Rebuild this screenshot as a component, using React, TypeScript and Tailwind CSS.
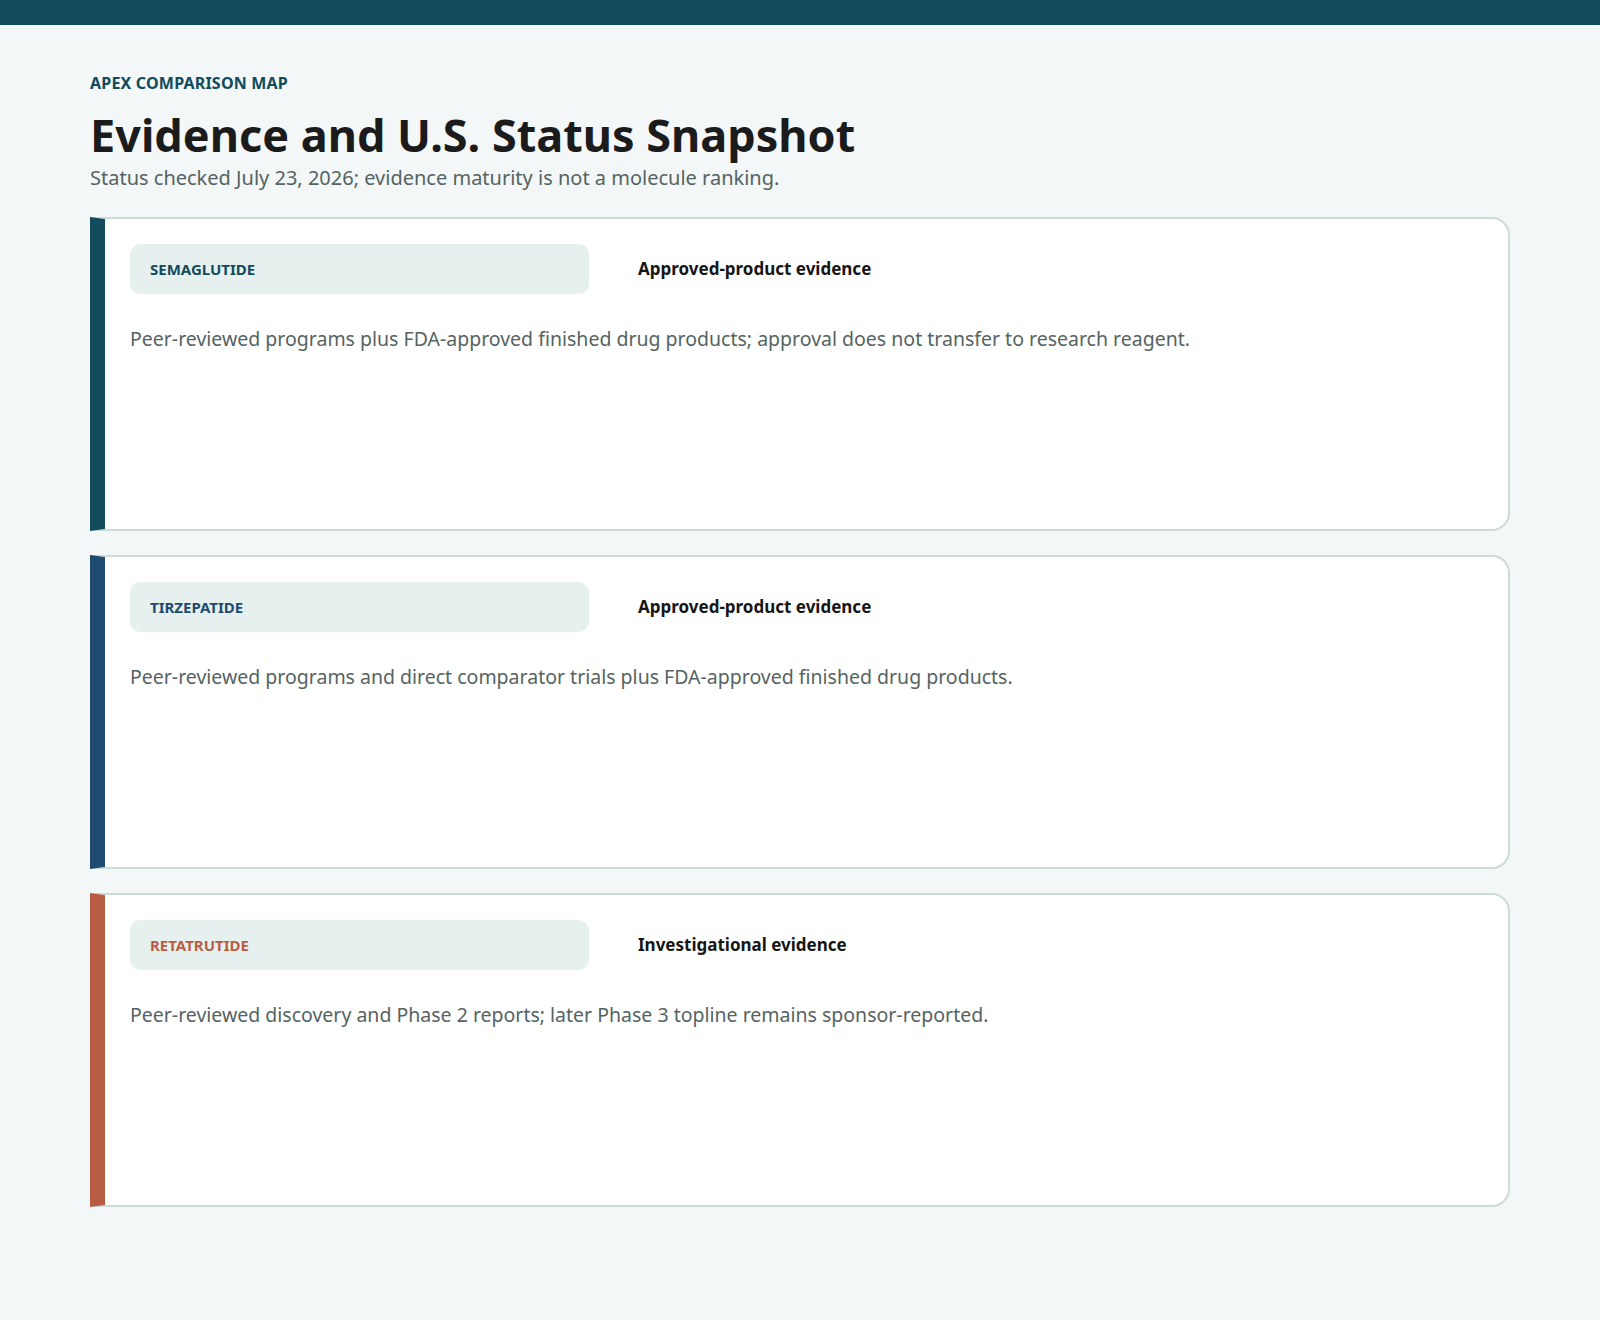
const ITEMS = [
  {
    name: "SEMAGLUTIDE",
    bar: "border-l-[#114b5c]",
    text: "text-[#114b5c]",
    label: "Approved-product evidence",
    desc: "Peer-reviewed programs plus FDA-approved finished drug products; approval does not transfer to research reagent.",
  },
  {
    name: "TIRZEPATIDE",
    bar: "border-l-[#1f4b70]",
    text: "text-[#1f4b70]",
    label: "Approved-product evidence",
    desc: "Peer-reviewed programs and direct comparator trials plus FDA-approved finished drug products.",
  },
  {
    name: "RETATRUTIDE",
    bar: "border-l-[#b85c43]",
    text: "text-[#b85c43]",
    label: "Investigational evidence",
    desc: "Peer-reviewed discovery and Phase 2 reports; later Phase 3 topline remains sponsor-reported.",
  },
];

export default function App() {
  return (
    <div className="min-h-[1320px] bg-[#f3f7f7] font-['Liberation_Sans',Arial,sans-serif]">
      <div className="h-[25px] bg-[#114b5c]" />
      <div className="px-[90px] pt-[46px]">
        <p className="text-[16px] font-bold uppercase tracking-[0.2px] text-[#114b5c]">Apex comparison map</p>
        <h1 className="mt-[14px] text-[45px] font-bold leading-[52px] text-[#1b1b1b]">Evidence and U.S. Status Snapshot</h1>
        <p className="mt-[2px] text-[20px] text-[#556362]">
          Status checked July 23, 2026; evidence maturity is not a molecule ranking.
        </p>
        <div className="mt-[24px] flex flex-col gap-[24px]">
          {ITEMS.map((it) => (
            <div
              key={it.name}
              className={`h-[314px] rounded-r-[18px] border-2 border-l-[15px] border-[#ccdcd9] bg-white pl-[25px] pr-[24px] pt-[25px] ${it.bar}`}
            >
              <div className="flex items-center gap-[49px]">
                <div className="flex h-[50px] w-[459px] items-center rounded-[10px] bg-[#e6f0ef] px-[20px]">
                  <span className={`text-[15px] font-bold ${it.text}`}>{it.name}</span>
                </div>
                <span className="text-[17px] font-bold text-[#161616]">{it.label}</span>
              </div>
              <p className="mt-[30px] text-[19.5px] text-[#556362]">{it.desc}</p>
            </div>
          ))}
        </div>
      </div>
    </div>
  );
}
